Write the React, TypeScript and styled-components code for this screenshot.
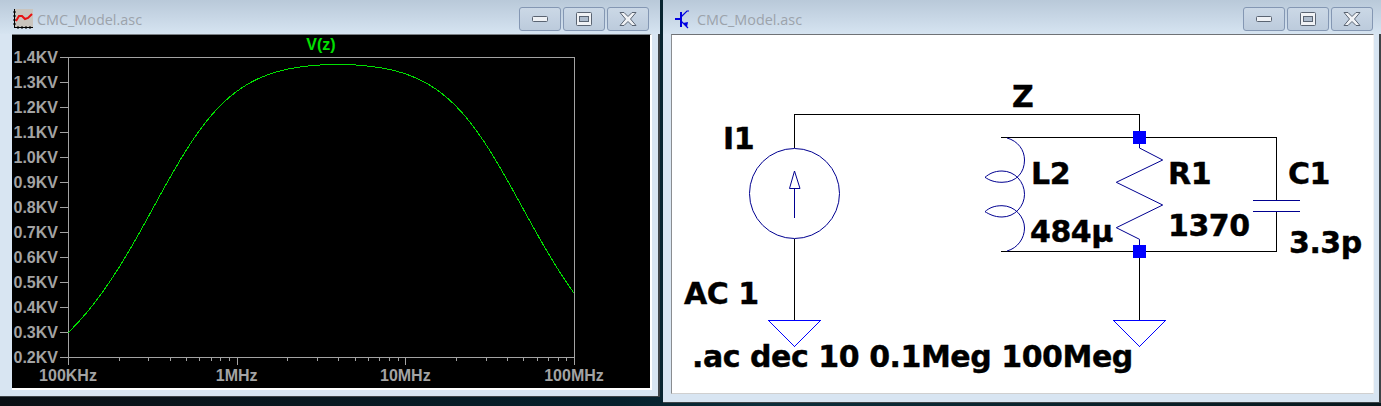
import styled, { createGlobalStyle } from "styled-components"

const GlobalStyle = createGlobalStyle`
    html, body {
        margin: 0;
        padding: 0;
        height: 406px;
        overflow: hidden;
        background: #07131a;
    }
`

const DesktopStyle = styled.div`
    display: flex;
    align-items: flex-start;
    gap: 3px;
    width: 1381px;
    height: 406px;
    background: linear-gradient(90deg, #0a0f14 0%, #06202c 45%, #0b2d3a 55%, #08161c 100%);
`

const WindowStyle = styled.div<{ $width: number; $height: number }>`
    display: flex;
    flex-direction: column;
    box-sizing: border-box;
    width: ${(p) => p.$width}px;
    height: ${(p) => p.$height}px;
    background: #d8e5f2;
    box-shadow: inset -2px 0 0 #3f4448, inset 0 -1px 0 #3f4448;
`

const TitleBarStyle = styled.div<{ $left: number; $right: number }>`
    display: flex;
    align-items: center;
    flex: none;
    height: 34px;
    padding: 4px ${(p) => p.$right}px 0 ${(p) => p.$left}px;
    box-sizing: border-box;
    background: linear-gradient(180deg, #b9c9d9 0%, #c7d6e5 50%, #d6e4f1 100%);
`

const TitleStyle = styled.div`
    margin-left: 4px;
    font-family: "Open Sans", sans-serif;
    font-size: 14.4px;
    color: #9ca3ab;
`

const ControlsStyle = styled.div`
    display: flex;
    gap: 2px;
    margin-left: auto;
`

const ControlStyle = styled.div`
    display: flex;
    align-items: center;
    justify-content: center;
    width: 42px;
    height: 24px;
    box-sizing: border-box;
    border: 1px solid #8497b3;
    border-radius: 3px;
    background: linear-gradient(180deg, #cbd8e6 0%, #bccbdc 100%);
`

const PlotPaneStyle = styled.div`
    flex: none;
    width: 638px;
    height: 353px;
    margin-left: 12px;
    background: #000;
    border-bottom: 2px solid #fff;
    border-right: 2px solid #fff;
    border-top: 1px solid #7a7f84;
    box-sizing: content-box;
`

const SchematicPaneStyle = styled.div`
    flex: none;
    width: 701px;
    height: 358px;
    margin-left: 8px;
    background: #fff;
    border-top: 1px solid #6f7276;
    border-left: 1px solid #8a8d90;
    border-bottom: 1px solid #d0d0d0;
    border-right: 1px solid #f4f4f4;
`

const DrawingStyle = styled.svg`
    display: block;
`

const AxisLabelStyle = styled.text`
    font-family: "Liberation Sans", Arial, sans-serif;
    font-weight: 700;
    font-size: 16px;
    fill: #a3a3a3;
`

const TraceLabelStyle = styled.text`
    font-family: "Liberation Sans", Arial, sans-serif;
    font-weight: 700;
    font-size: 16px;
    fill: #00e000;
`

const NetLabelStyle = styled.text`
    font-family: "DejaVu Sans", Verdana, sans-serif;
    font-weight: 700;
    font-size: 30px;
    letter-spacing: -0.45px;
    fill: #000;
    stroke: #000;
    stroke-width: 0.4px;
`

const PLOT = { left: 68, right: 574, top: 57, bottom: 357 }
const DECADE = (PLOT.right - PLOT.left) / 3

const yLabels = ["1.4", "1.3", "1.2", "1.1", "1.0", "0.9", "0.8", "0.7", "0.6", "0.5", "0.4", "0.3", "0.2"]
const xLabels = ["100KHz", "1MHz", "10MHz", "100MHz"]

// parallel RLC driven by 1A, same values as in the schematic
const impedance = (f: number) => {
    const w = 2 * Math.PI * f
    const b = 1 / (w * 484e-6) - w * 3.3e-12
    return 1 / Math.sqrt(1 / (1370 * 1370) + b * b)
}

const curve = () => {
    const points: string[] = []
    for (let x = PLOT.left; x <= PLOT.right; x += 2) {
        const f = 1e5 * Math.pow(10, (x - PLOT.left) / DECADE)
        const y = PLOT.top + (1.4 - impedance(f) / 1000) * 250
        points.push(`${x},${y.toFixed(1)}`)
    }
    return points.join(" ")
}

const minorTicks = () => {
    const ticks: number[] = []
    for (let d = 0; d < 3; d++) {
        for (let m = 2; m < 10; m++) {
            ticks.push(PLOT.left + (d + Math.log10(m)) * DECADE)
        }
    }
    return ticks.map((x) => Math.round(x) + 0.5)
}

const ControlButtons = () => (
    <ControlsStyle>
        <ControlStyle>
            <svg width="18" height="8" viewBox="0 0 18 8">
                <rect x="1.5" y="1.5" width="15" height="5" rx="1" fill="#eef1f5" stroke="#5a6472" />
            </svg>
        </ControlStyle>
        <ControlStyle>
            <svg width="18" height="16" viewBox="0 0 18 16">
                <rect x="1.5" y="1.5" width="15" height="13" rx="1" fill="#f0f2f5" stroke="#5a6472" />
                <rect x="4.5" y="5.5" width="9" height="5" fill="#aebccd" stroke="#5a6472" />
            </svg>
        </ControlStyle>
        <ControlStyle>
            <svg width="20" height="16" viewBox="0 0 20 16">
                <path d="M2 1.5h4l4 4 4-4h4l-5.5 6.5 5.5 6.5h-4l-4-4-4 4H2l5.5-6.5z" fill="#f0f2f5" stroke="#5a6472" />
            </svg>
        </ControlStyle>
    </ControlsStyle>
)

const WaveIcon = () => (
    <svg width="20" height="20" viewBox="0 0 20 20">
        <rect x="2" y="0" width="18" height="18" fill="#c9c4bd" />
        <path d="M1.5 0v19M0 3h3M0 7h3M0 11h3M0 15h3M1 18.5h19M5 17v3M9 17v3M13 17v3M17 17v3" stroke="#000" fill="none" />
        <path d="M3 12l3-5 3 0 3 3 3-1 4-4" stroke="#e81010" strokeWidth="2" fill="none" />
    </svg>
)

const TransistorIcon = () => (
    <svg width="20" height="20" viewBox="0 0 20 20">
        <path d="M2 10h5M8 3v15" stroke="#0000e0" strokeWidth="2" fill="none" />
        <path d="M8 8l6-6h2M8 12l7 7" stroke="#0000e0" strokeWidth="1.2" fill="none" />
        <path d="M10 14l5-1-1 5z" fill="#0000e0" />
    </svg>
)

const PlotPane = () => (
    <PlotPaneStyle>
        <DrawingStyle width="638" height="353" viewBox="12 35 638 353">
            <g stroke="#a3a3a3" fill="none" shapeRendering="crispEdges">
                <path d={`M60 57.5H574.5V365M68.5 57V365M68 357.5H574`} />
                {yLabels.map((_, i) => (
                    <path key={i} d={`M60 ${57.5 + i * 25}H68`} />
                ))}
                {minorTicks().map((x) => (
                    <path key={x} d={`M${x} 357V361`} />
                ))}
                {xLabels.map((_, i) => (
                    <path key={i} d={`M${Math.round(PLOT.left + i * DECADE) + 0.5} 357V365`} />
                ))}
            </g>
            <polyline points={curve()} fill="none" stroke="#00e000" shapeRendering="crispEdges" />
            <TraceLabelStyle x="321" y="50" textAnchor="middle">V(z)</TraceLabelStyle>
            {yLabels.map((label, i) => (
                <AxisLabelStyle key={label} x="58" y={63 + i * 25} textAnchor="end">{label}KV</AxisLabelStyle>
            ))}
            {xLabels.map((label, i) => (
                <AxisLabelStyle key={label} x={PLOT.left + i * DECADE} y="381" textAnchor="middle">{label}</AxisLabelStyle>
            ))}
        </DrawingStyle>
    </PlotPaneStyle>
)

const Ground = ({ x }: { x: number }) => (
    <path d={`M${x - 26} 320.5H${x + 26}L${x} 346.5Z`} fill="none" stroke="#0000ff" shapeRendering="crispEdges" />
)

const SchematicPane = () => (
    <SchematicPaneStyle>
        <DrawingStyle width="701" height="358" viewBox="672 35 701 358">
            <g fill="none" stroke="#000" shapeRendering="crispEdges">
                <path d="M794.5 148V114.5H1139.5V137" />
                <path d="M794.5 239V320" />
                <path d="M1001 137.5H1276.5V200" />
                <path d="M1001 251.5H1276.5V211" />
                <path d="M1139.5 251V320" />
            </g>
            <g fill="none" stroke="#000090" strokeWidth="1">
                <circle cx="794.5" cy="193.5" r="45" />
                <path d="M794.5 218V188" shapeRendering="crispEdges" />
                <path d="M794.5 171L789.5 188.5H800Z" />
                <path d="M1139.5 144V148L1162.7 160L1116.3 182.3L1162.7 205L1116.3 227.7L1139.5 239.3V245" />
                <path d="M1253 200.5H1300M1253 211.5H1300" shapeRendering="crispEdges" />
                <path d="M1007 138C1018 141 1024.5 150 1024.5 160C1024.5 172 1017 182.3 1002 182.3C994 182.3 989 180 985 177.3C989 174 994 171 1002 171C1015 171 1024.5 182 1024.5 194.3C1024.5 206 1015 217 1002 217C994 217 989 214 985 211.7C989 208 994 205.7 1002 205.7C1015 205.7 1024.5 217 1024.5 228C1024.5 238 1018 248 1007 251" />
            </g>
            <rect x="1133" y="131" width="13" height="13" fill="#0000ff" />
            <rect x="1133" y="245" width="13" height="13" fill="#0000ff" />
            <Ground x={794.5} />
            <Ground x={1139.5} />
            <NetLabelStyle x="1012" y="107">Z</NetLabelStyle>
            <NetLabelStyle x="723" y="149">I1</NetLabelStyle>
            <NetLabelStyle x="1031" y="184">L2</NetLabelStyle>
            <NetLabelStyle x="1030" y="242">484µ</NetLabelStyle>
            <NetLabelStyle x="1168" y="184">R1</NetLabelStyle>
            <NetLabelStyle x="1168" y="236">1370</NetLabelStyle>
            <NetLabelStyle x="1288" y="184">C1</NetLabelStyle>
            <NetLabelStyle x="1289" y="253">3.3p</NetLabelStyle>
            <NetLabelStyle x="684" y="304">AC 1</NetLabelStyle>
            <NetLabelStyle x="692" y="367">.ac dec 10 0.1Meg 100Meg</NetLabelStyle>
        </DrawingStyle>
    </SchematicPaneStyle>
)

export default function App() {
    return (
        <>
            <GlobalStyle />
            <DesktopStyle>
                <WindowStyle $width={660} $height={397}>
                    <TitleBarStyle $left={13} $right={11}>
                        <WaveIcon />
                        <TitleStyle>CMC_Model.asc</TitleStyle>
                        <ControlButtons />
                    </TitleBarStyle>
                    <PlotPane />
                </WindowStyle>
                <WindowStyle $width={718} $height={403}>
                    <TitleBarStyle $left={10} $right={8}>
                        <TransistorIcon />
                        <TitleStyle>CMC_Model.asc</TitleStyle>
                        <ControlButtons />
                    </TitleBarStyle>
                    <SchematicPane />
                </WindowStyle>
            </DesktopStyle>
        </>
    )
}
